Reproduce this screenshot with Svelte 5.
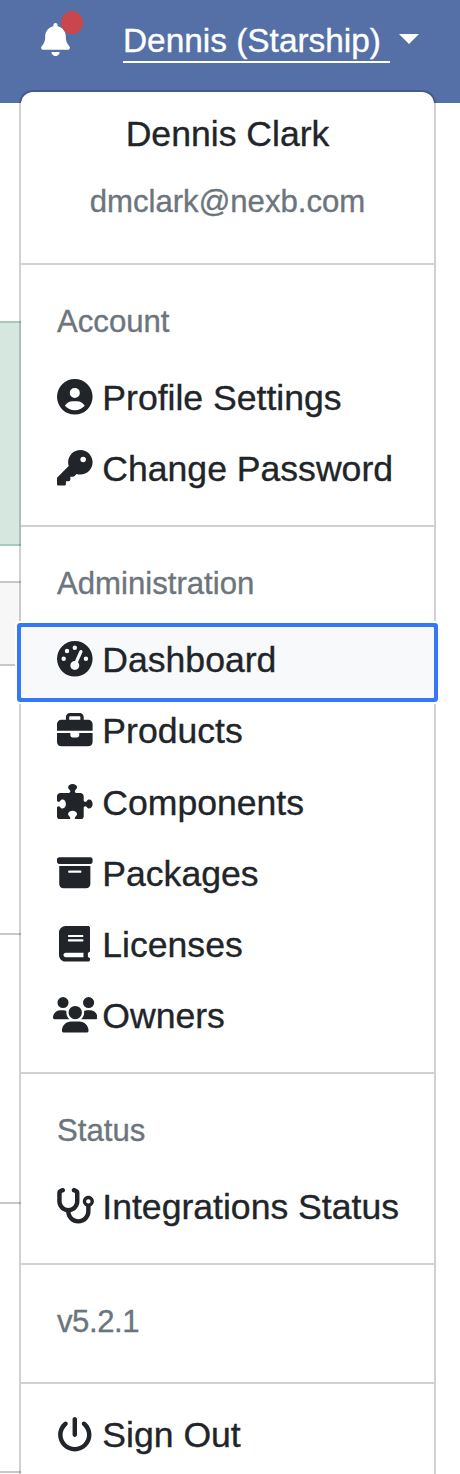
<script>
  const icons = {
    bell: { w: 448, d: 'M224 0c-17.7 0-32 14.3-32 32V51.2C119 66 64 130.6 64 208v18.8c0 47-17.3 92.4-48.5 127.6l-7.4 8.3c-8.4 9.4-10.4 22.9-5.3 34.4S19.4 416 32 416H416c12.6 0 24-7.4 29.2-18.9s3.1-25-5.3-34.4l-7.4-8.3C401.3 319.2 384 273.9 384 226.8V208c0-77.4-55-142-128-156.8V32c0-17.7-14.3-32-32-32zm45.3 493.3c12-12 18.7-28.3 18.7-45.3H224 160c0 17 6.7 33.3 18.7 45.3s28.3 18.7 45.3 18.7s33.3-6.7 45.3-18.7z' },
    user: { w: 512, d: 'M399 384.2C376.9 345.8 335.4 320 288 320H224c-47.4 0-88.9 25.8-111 64.2c35.2 39.2 86.2 63.8 143 63.8s107.8-24.7 143-63.8zM0 256a256 256 0 1 1 512 0A256 256 0 1 1 0 256zm256 16a72 72 0 1 0 0-144 72 72 0 1 0 0 144z' },
    key: { w: 512, d: 'M336 352c97.2 0 176-78.8 176-176S433.2 0 336 0S160 78.8 160 176c0 18.7 2.9 36.8 8.3 53.7L7 391c-4.5 4.5-7 10.6-7 17v80c0 13.3 10.7 24 24 24h80c13.3 0 24-10.7 24-24V448h40c13.3 0 24-10.7 24-24V384h40c6.4 0 12.5-2.5 17-7l33.3-33.3c16.9 5.4 35 8.3 53.7 8.3zM376 96a40 40 0 1 1 0 80 40 40 0 1 1 0-80z' },
    gauge: { w: 512, d: 'M0 256a256 256 0 1 1 512 0A256 256 0 1 1 0 256zM288 96a32 32 0 1 0 -64 0 32 32 0 1 0 64 0zM256 416c35.3 0 64-28.7 64-64c0-17.4-6.9-33.1-18.1-44.6L366 161.7c5.3-12.1-.2-26.3-12.3-31.6s-26.3 .2-31.6 12.3L257.9 288c-.6 0-1.3 0-1.9 0c-35.3 0-64 28.7-64 64s28.7 64 64 64zM176 144a32 32 0 1 0 -64 0 32 32 0 1 0 64 0zM96 288a32 32 0 1 0 0-64 32 32 0 1 0 0 64zm352-32a32 32 0 1 0 -64 0 32 32 0 1 0 64 0z' },
    briefcase: { w: 512, d: 'M184 48H328c4.4 0 8 3.6 8 8V96H176V56c0-4.4 3.6-8 8-8zm-56 8V96H64C28.7 96 0 124.7 0 160v96H192 320 512V160c0-35.3-28.7-64-64-64H384V56c0-30.9-25.1-56-56-56H184c-30.9 0-56 25.1-56 56zM512 288H320v32c0 17.7-14.3 32-32 32H224c-17.7 0-32-14.3-32-32V288H0V416c0 35.3 28.7 64 64 64H448c35.3 0 64-28.7 64-64V288z' },
    puzzle: { w: 512, d: 'M192 104.8c0-9.2-5.8-17.3-13.2-22.8C167.2 73.3 160 61.3 160 48c0-26.5 28.7-48 64-48s64 21.5 64 48c0 13.3-7.2 25.3-18.8 34c-7.4 5.5-13.2 13.6-13.2 22.8v0c0 12.8 10.4 23.2 23.2 23.2H336c26.5 0 48 21.5 48 48v56.8c0 12.8 10.4 23.2 23.2 23.2v0c9.2 0 17.3-5.8 22.8-13.2c8.7-11.6 20.7-18.8 34-18.8c26.5 0 48 28.7 48 64s-21.5 64-48 64c-13.3 0-25.3-7.2-34-18.8c-5.5-7.4-13.6-13.2-22.8-13.2v0c-12.8 0-23.2 10.4-23.2 23.2V464c0 26.5-21.5 48-48 48H279.2c-12.8 0-23.2-10.4-23.2-23.2v0c0-9.2 5.8-17.3 13.2-22.8c11.6-8.7 18.8-20.7 18.8-34c0-26.5-28.7-48-64-48s-64 21.5-64 48c0 13.3 7.2 25.3 18.8 34c7.4 5.5 13.2 13.6 13.2 22.8v0c0 12.8-10.4 23.2-23.2 23.2H48c-26.5 0-48-21.5-48-48V343.2C0 330.4 10.4 320 23.2 320v0c9.2 0 17.3 5.8 22.8 13.2C54.7 344.8 66.7 352 80 352c26.5 0 48-28.7 48-64s-21.5-64-48-64c-13.3 0-25.3 7.2-34 18.8C40.5 250.2 32.4 256 23.2 256v0C10.4 256 0 245.6 0 232.8V176c0-26.5 21.5-48 48-48H168.8c12.8 0 23.2-10.4 23.2-23.2v0z' },
    archive: { w: 512, d: 'M32 32H480c17.7 0 32 14.3 32 32V96c0 17.7-14.3 32-32 32H32C14.3 128 0 113.7 0 96V64C0 46.3 14.3 32 32 32zm0 128H480V416c0 35.3-28.7 64-64 64H96c-35.3 0-64-28.7-64-64V160zm128 80c0 8.8 7.2 16 16 16H336c8.8 0 16-7.2 16-16s-7.2-16-16-16H176c-8.8 0-16 7.2-16 16z' },
    book: { w: 448, d: 'M96 0C43 0 0 43 0 96V416c0 53 43 96 96 96H384h32c17.7 0 32-14.3 32-32s-14.3-32-32-32V384c17.7 0 32-14.3 32-32V32c0-17.7-14.3-32-32-32H384 96zm0 384H352v64H96c-17.7 0-32-14.3-32-32s14.3-32 32-32zm32-240c0-8.8 7.2-16 16-16H336c8.8 0 16 7.2 16 16s-7.2 16-16 16H144c-8.8 0-16-7.2-16-16zm16 48H336c8.8 0 16 7.2 16 16s-7.2 16-16 16H144c-8.8 0-16-7.2-16-16s7.2-16 16-16z' },
    users: { w: 640, d: 'M144 0a80 80 0 1 1 0 160A80 80 0 1 1 144 0zM512 0a80 80 0 1 1 0 160A80 80 0 1 1 512 0zM0 298.7C0 239.8 47.8 192 106.7 192h42.7c15.9 0 31 3.5 44.6 9.7c-1.3 7.2-1.9 14.7-1.9 22.3c0 38.2 16.8 72.5 43.3 96c-.2 0-.4 0-.7 0H21.3C9.6 320 0 310.4 0 298.7zM405.3 320c-.2 0-.4 0-.7 0c26.6-23.5 43.3-57.8 43.3-96c0-7.6-.7-15-1.9-22.3c13.6-6.3 28.7-9.7 44.6-9.7h42.7C592.2 192 640 239.8 640 298.7c0 11.8-9.6 21.3-21.3 21.3H405.3zM224 224a96 96 0 1 1 192 0 96 96 0 1 1 -192 0zM128 485.3C128 411.7 187.7 352 261.3 352H378.7C452.3 352 512 411.7 512 485.3c0 14.7-11.9 26.7-26.7 26.7H154.7c-14.7 0-26.7-11.9-26.7-26.7z' },
    stethoscope: { w: 576, d: 'M142.4 21.9c5.6 16.8-3.5 34.9-20.2 40.5L96 71.1V192c0 53 43 96 96 96s96-43 96-96V71.1l-26.1-8.7c-16.8-5.6-25.8-23.7-20.2-40.5s23.7-25.8 40.5-20.2l26.1 8.7C334.4 19.1 352 43.5 352 71.1V192c0 77.2-54.6 141.6-127.3 156.7C231 404.6 278.4 448 336 448c61.9 0 112-50.1 112-112V265.3c-28.3-12.3-48-40.5-48-73.3c0-44.2 35.8-80 80-80s80 35.8 80 80c0 32.8-19.7 61-48 73.3V336c0 97.2-78.8 176-176 176c-92.9 0-168.9-71.9-175.5-163.1C87.2 334.2 32 269.6 32 192V71.1c0-27.5 17.6-52 43.8-60.7l26.1-8.7c16.8-5.6 34.9 3.5 40.5 20.2zM480 224a32 32 0 1 0 0-64 32 32 0 1 0 0 64z' },
    power: { w: 512, d: 'M288 32c0-17.7-14.3-32-32-32s-32 14.3-32 32V256c0 17.7 14.3 32 32 32s32-14.3 32-32V32zM143.5 120.6c13.6-11.3 15.4-31.5 4.1-45.1s-31.5-15.4-45.1-4.1C49.7 115.4 16 181.8 16 256c0 132.5 107.5 240 240 240s240-107.5 240-240c0-74.2-33.8-140.6-86.6-184.6c-13.6-11.3-33.8-9.4-45.1 4.1s-9.4 33.8 4.1 45.1c38.9 32.3 63.5 81 63.5 135.4c0 97.2-78.8 176-176 176s-176-78.8-176-176c0-54.4 24.7-103.1 63.5-135.4z' }
  };

  const sections = [
    { title: 'Account', items: [['user', 'Profile Settings'], ['key', 'Change Password']] },
    {
      title: 'Administration',
      items: [
        ['gauge', 'Dashboard'],
        ['briefcase', 'Products'],
        ['puzzle', 'Components'],
        ['archive', 'Packages'],
        ['book', 'Licenses'],
        ['users', 'Owners']
      ]
    },
    { title: 'Status', items: [['stethoscope', 'Integrations Status']] },
    { title: 'v5.2.1', items: [] },
    { title: '', items: [['power', 'Sign Out']] }
  ];
  const active = 'Dashboard';
</script>

{#snippet icon(name)}
  <svg class="icon" viewBox="0 0 {icons[name].w} 512" aria-hidden="true"><path d={icons[name].d} /></svg>
{/snippet}

<div class="page">
  <nav class="navbar">
    <span class="bell">{@render icon('bell')}<i class="dot"></i></span>
    <span class="account">Dennis (Starship)</span>
    <span class="caret"></span>
  </nav>

  <main class="content">
    <div class="alert"></div>
    <div class="table-head"></div>
    <div class="table-row"></div>
    <div class="table-row"></div>
    <div class="table-row"></div>
  </main>

  <div class="menu">
    <header class="identity">
      <div class="name">Dennis Clark</div>
      <div class="email">dmclark@nexb.com</div>
    </header>
    {#each sections as section}
      <section>
        {#if section.title}<h6 class:version={section.items.length === 0}>{section.title}</h6>{/if}
        {#each section.items as [glyph, label]}
          <div class="item" class:active={label === active}>
            <span class="slot">{@render icon(glyph)}</span>
            <span class="label">{label}</span>
          </div>
        {/each}
      </section>
    {/each}
  </div>
</div>

<style>
  .page {
    position: relative;
    width: 460px;
    height: 1474px;
    overflow: hidden;
    background: #fff;
    color: #212529;
    font-family: "Liberation Sans", Arial, sans-serif;
    font-size: 35.6px;
    -webkit-text-stroke: 0.35px currentColor;
  }
  .icon { display: block; height: 35.6px; fill: currentColor; }
  .navbar {
    display: flex;
    align-items: flex-start;
    box-sizing: border-box;
    height: 103px;
    padding: 0 0 0 41px;
    background: #5470a6;
    color: #fff;
  }
  .bell { position: relative; width: 29px; margin-top: 23px; }
  .bell .icon { width: 29px; height: 33px; }
  .dot {
    position: absolute;
    left: 20px;
    top: -12px;
    width: 22px;
    height: 23px;
    border-radius: 50%;
    background: #c8464c;
  }
  .account {
    box-sizing: border-box;
    width: 267px;
    height: 43px;
    margin: 20px 0 0 53px;
    border-bottom: 2px solid #fff;
    font-size: 33.4px;
    line-height: 42px;
    white-space: nowrap;
  }
  .caret {
    margin: 34px 0 0 9px;
    border: 10px solid transparent;
    border-top-color: #fff;
    border-bottom: 0;
  }
  .content { padding-top: 218px; }
  .alert {
    box-sizing: border-box;
    height: 225px;
    border: solid #a5ccba;
    border-width: 2px 0;
    background: #d5e7df;
  }
  .table-head {
    box-sizing: border-box;
    height: 85px;
    margin-top: 35px;
    border: solid #c8c8c8;
    border-width: 2px 0;
    background: #f7f7f7;
  }
  .table-row {
    box-sizing: border-box;
    height: 269px;
    border-bottom: 2px solid #c8c8c8;
  }
  .content > * { width: 21px; }
  .menu {
    position: absolute;
    left: 19px;
    top: 90px;
    width: 413px;
    height: 1420px;
    border: 2px solid rgba(0, 0, 0, .18);
    border-radius: 14px;
    background: #fff;
    background-clip: padding-box;
  }
  .identity { height: 171px; text-align: center; }
  .name { padding-top: 19px; line-height: 47px; }
  .email { padding-top: 26px; font-size: 31.15px; line-height: 36px; color: #6c757d; }
  section { padding: 18px 0 17.8px; border-top: 2px solid #d1d1d1; }
  h6 {
    box-sizing: border-box;
    height: 82px;
    margin: 0;
    padding: 21px 0 0 36px;
    font-size: 31.15px;
    font-weight: 400;
    line-height: 36px;
    color: #6c757d;
  }
  .version { height: 81.4px; letter-spacing: -.45px; }
  .item {
    display: flex;
    align-items: center;
    box-sizing: border-box;
    height: 71.2px;
    padding: 0 0 4px 31.5px;
    white-space: nowrap;
  }
  .slot {
    display: flex;
    justify-content: center;
    width: 44.5px;
    margin: -3px 5.3px 0 0;
  }
  .active {
    position: relative;
    border-radius: 1px;
    background: #f8f9fa;
    box-shadow: 0 0 0 4px #3478f6, 0 0 0 6px #fff;
  }
</style>
